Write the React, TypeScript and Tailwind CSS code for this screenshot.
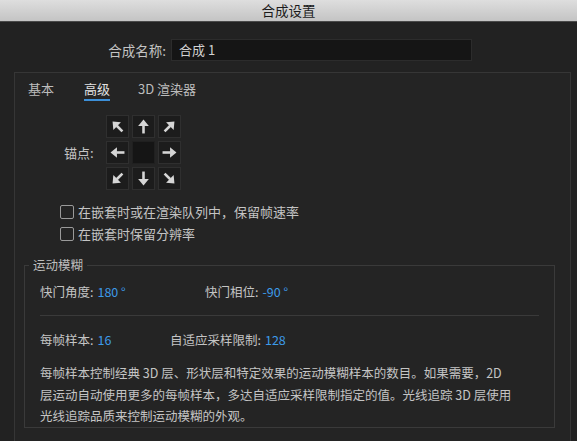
import React from "react";

const FONT = { fontFamily: '"Noto Sans CJK SC", "Noto Sans", sans-serif' };

// rotation per anchor cell, null = centre cell
const ANCHORS: (number | null)[] = [-45, 0, 45, -90, null, 90, -135, 180, 135];

function Arrow({ angle }: { angle: number }) {
  return (
    <svg width="15" height="15" viewBox="0 0 14 14">
      <g transform={`rotate(${angle} 7 7)`} fill="#d6d6d6">
        <polygon points="7,0.5 12,6.5 2,6.5" />
        <rect x="5.8" y="6" width="2.4" height="7.5" />
      </g>
    </svg>
  );
}

function Checkbox({ label }: { label: string }) {
  return (
    <div className="flex items-center h-[22px] gap-[4px]">
      <div className="w-[14px] h-[14px] border-[1.5px] border-[#9a9a9a] rounded-[2px]" />
      <span className="text-[13px]">{label}</span>
    </div>
  );
}

export default function App() {
  return (
    <div
      style={FONT}
      className="w-[577px] h-[441px] overflow-hidden bg-[#222222] flex flex-col text-[12.5px] text-[#c4c4c4]"
    >
      {/* Title bar */}
      <div className="h-[22px] shrink-0 flex items-center justify-center bg-gradient-to-b from-[#dedede] to-[#c4c4c4] border-b border-[#4a4a4a] text-[13.5px] text-[#1c1c1c]">
        合成设置
      </div>

      {/* Name row */}
      <div className="mt-[17px] flex items-center shrink-0">
        <div className="w-[166px] text-right text-[13.5px]">合成名称:</div>
        <div className="ml-[5px] w-[301px] h-[22px] bg-[#151515] border border-[#2c2c2c] flex items-center px-[7px] text-[13px] text-[#d2d2d2]">
          合成 1
        </div>
      </div>

      {/* Panel */}
      <div className="mt-[11px] ml-[14px] mr-[6px] flex-1 bg-[#242424] border-t border-l border-r border-[#363636] flex flex-col">
        {/* Tabs */}
        <div className="flex pl-[13px] pt-[8px] leading-[16px] text-[13px]">
          <div className="text-[#bdbdbd]">基本</div>
          <div className="ml-[30px] flex flex-col text-[#e2e2e2]">
            <span>高级</span>
            <div className="mt-[2px] h-[2px] bg-[#3c8fd8]" />
          </div>
          <div className="ml-[28px] text-[#bdbdbd]">3D 渲染器</div>
        </div>

        {/* Anchor */}
        <div className="mt-[14px] flex items-center pl-[49px]">
          <span className="text-[13px]">锚点:</span>
          <div className="ml-[12px] grid grid-cols-3 gap-[3px]">
            {ANCHORS.map((a, i) => (
              <div
                key={i}
                className={`w-[23px] h-[23px] flex items-center justify-center border ${
                  a === null ? "bg-[#151515] border-[#202020]" : "bg-[#1c1c1c] border-[#2f2f2f]"
                }`}
              >
                {a !== null && <Arrow angle={a} />}
              </div>
            ))}
          </div>
        </div>

        {/* Checkboxes */}
        <div className="mt-[11px] pl-[45px] flex flex-col">
          <Checkbox label="在嵌套时或在渲染队列中，保留帧速率" />
          <Checkbox label="在嵌套时保留分辨率" />
        </div>

        {/* Motion blur */}
        <fieldset className="mt-[12px] ml-[9px] mr-[15px] border border-[#3a3a3a]">
          <legend className="ml-[4px] px-[4px] leading-[16px] text-[#bdbdbd]">运动模糊</legend>
          <div className="px-[15px]">
            <div className="mt-[11px] flex items-center leading-[16px]">
              <div className="w-[165px] flex gap-[4px]">
                <span>快门角度:</span>
                <span className="text-[#3d9be9]">180 °</span>
              </div>
              <div className="flex gap-[4px]">
                <span>快门相位:</span>
                <span className="text-[#3d9be9]">-90 °</span>
              </div>
            </div>
            <div className="mt-[15px] h-[1px] bg-[#3a3a3a]" />
            <div className="mt-[16px] flex items-center leading-[16px]">
              <div className="w-[130px] flex gap-[4px]">
                <span>每帧样本:</span>
                <span className="text-[#3d9be9]">16</span>
              </div>
              <div className="flex gap-[4px]">
                <span>自适应采样限制:</span>
                <span className="text-[#3d9be9]">128</span>
              </div>
            </div>
            <p className="mt-[14px] leading-[21.5px] whitespace-nowrap">
              每帧样本控制经典 3D 层、形状层和特定效果的运动模糊样本的数目。如果需要，2D
              <br />
              层运动自动使用更多的每帧样本，多达自适应采样限制指定的值。光线追踪 3D 层使用
              <br />
              光线追踪品质来控制运动模糊的外观。
            </p>
          </div>
        </fieldset>
      </div>
    </div>
  );
}
